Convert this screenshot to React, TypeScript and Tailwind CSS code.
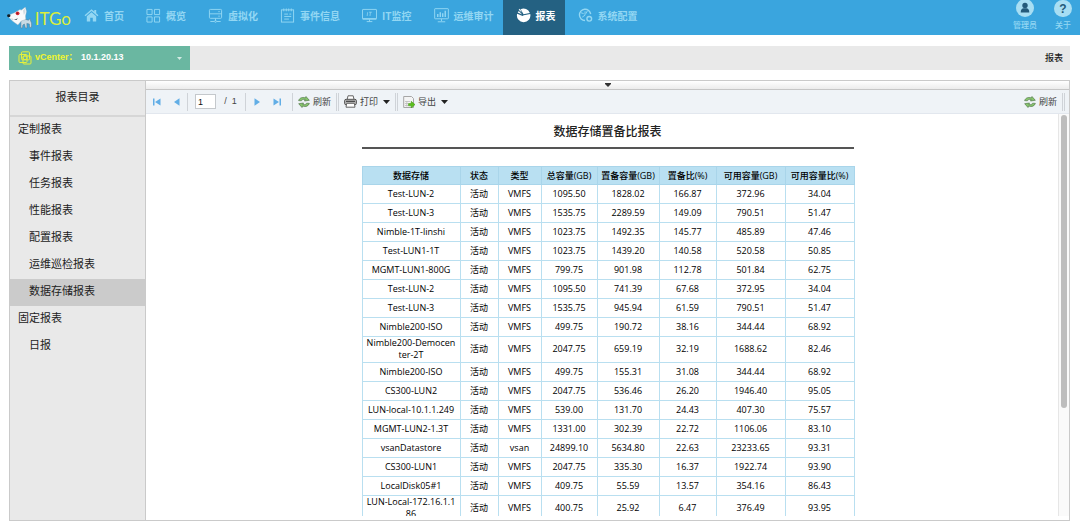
import { useState, type ReactNode } from "react";

const navItems = ["首页", "概览", "虚拟化", "事件信息", "IT监控", "运维审计", "报表", "系统配置"];

const navIcons: Record<string, ReactNode> = {
  首页: (
    <g fill="currentColor" stroke="none">
      <path d="M8 1.2 0.6 7.6l1 1.1L8 3.2l6.4 5.5 1-1.1-2.4-2.1V2h-2v1.8z" />
      <path d="M8 4.6 3 8.9V14.5h3.6v-4h2.8v4H13V8.9z" />
    </g>
  ),
  概览: <path d="M1 1.5h5.5V7H1zM9 1.5h5.5V7H9zM1 9.5h5.5V15H1zM9 9.5h5.5V15H9z" />,
  虚拟化: (
    <>
      <rect x="1.5" y="1.5" width="13" height="9.5" rx="1" />
      <path d="M1.5 6.2h13M11 3.9h1.5M11 8.7h1.5M8 11v3M2.5 14.4h4M9.5 14.4h4" />
      <circle cx="8" cy="14.3" r="1" />
    </>
  ),
  事件信息: (
    <>
      <rect x="1.5" y="2" width="13" height="13" />
      <path d="M4 .5v3M6.7 .5v3M9.3 .5v3M12 .5v3M4.5 6.5h4M4.5 9h7.5M4.5 11.8h5M10 6.5h2" />
    </>
  ),
  IT监控: (
    <>
      <rect x="0.5" y="1.5" width="15" height="10.5" rx="0.5" />
      <path d="M6 4.5 5.5 8.5M7.5 4.5h3M9 4.5l-.5 4" strokeWidth="0.8" />
      <path d="M1 11.3h14M5 14.5h6M8 12v2.5" />
    </>
  ),
  运维审计: (
    <>
      <rect x="0.7" y="0.7" width="14.6" height="10.8" rx="0.5" />
      <path d="M4 9.5V6.5M6.7 9.5V4.5M9.3 9.5V5.5M12 9.5V3" strokeWidth="1.5" />
      <path d="M8 11.5V14M4 14.7h8" />
    </>
  ),
  报表: (
    <g fill="currentColor" stroke="none">
      <path d="M1.2 6.2 7 8.6l1.2-.8 7-1.4A7.2 7.2 0 1 1 1.2 6.2z" />
      <path d="M8 6.6 5 1.3A7.2 7.2 0 0 1 14.8 5.2z" />
      <path d="M6.6 6.9 1.8 4.9 3 3.2z" />
      <path d="M6.2 4.9 2.8 1.9 4.2 .9z" />
    </g>
  ),
  系统配置: (
    <>
      <path d="M13.5 6.5A6 6 0 1 0 7.5 13.3" strokeWidth="1.5" />
      <path d="M7.5 3.5v4.2l-3 2M3 5l3 1M10 3l-1.5 3" />
      <circle cx="12" cy="11.5" r="2.5" strokeWidth="1.5" />
    </>
  ),
};

const menu = [
  { label: "定制报表", items: ["事件报表", "任务报表", "性能报表", "配置报表", "运维巡检报表", "数据存储报表"] },
  { label: "固定报表", items: ["日报"] },
];

const columns = [
  { label: "数据存储", width: "w-[98px]" },
  { label: "状态", width: "w-[38px]" },
  { label: "类型", width: "w-[43px]" },
  { label: "总容量(GB)", width: "w-[56px]" },
  { label: "置备容量(GB)", width: "w-[62px]" },
  { label: "置备比(%)", width: "w-[57px]" },
  { label: "可用容量(GB)", width: "w-[69px]" },
  { label: "可用容量比(%)", width: "w-[69px]" },
];

const rows = [
  ["Test-LUN-2", "活动", "VMFS", "1095.50", "1828.02", "166.87", "372.96", "34.04"],
  ["Test-LUN-3", "活动", "VMFS", "1535.75", "2289.59", "149.09", "790.51", "51.47"],
  ["Nimble-1T-linshi", "活动", "VMFS", "1023.75", "1492.35", "145.77", "485.89", "47.46"],
  ["Test-LUN1-1T", "活动", "VMFS", "1023.75", "1439.20", "140.58", "520.58", "50.85"],
  ["MGMT-LUN1-800G", "活动", "VMFS", "799.75", "901.98", "112.78", "501.84", "62.75"],
  ["Test-LUN-2", "活动", "VMFS", "1095.50", "741.39", "67.68", "372.95", "34.04"],
  ["Test-LUN-3", "活动", "VMFS", "1535.75", "945.94", "61.59", "790.51", "51.47"],
  ["Nimble200-ISO", "活动", "VMFS", "499.75", "190.72", "38.16", "344.44", "68.92"],
  ["Nimble200-Democen\nter-2T", "活动", "VMFS", "2047.75", "659.19", "32.19", "1688.62", "82.46"],
  ["Nimble200-ISO", "活动", "VMFS", "499.75", "155.31", "31.08", "344.44", "68.92"],
  ["CS300-LUN2", "活动", "VMFS", "2047.75", "536.46", "26.20", "1946.40", "95.05"],
  ["LUN-local-10.1.1.249", "活动", "VMFS", "539.00", "131.70", "24.43", "407.30", "75.57"],
  ["MGMT-LUN2-1.3T", "活动", "VMFS", "1331.00", "302.39", "22.72", "1106.06", "83.10"],
  ["vsanDatastore", "活动", "vsan", "24899.10", "5634.80", "22.63", "23233.65", "93.31"],
  ["CS300-LUN1", "活动", "VMFS", "2047.75", "335.30", "16.37", "1922.74", "93.90"],
  ["LocalDisk05#1", "活动", "VMFS", "409.75", "55.59", "13.57", "354.16", "86.43"],
  ["LUN-Local-172.16.1.1\n86", "活动", "VMFS", "400.75", "25.92", "6.47", "376.49", "93.95"],
];

function DogLogo() {
  return (
    <svg viewBox="0 0 26 22" className="h-[22px] w-[26px]">
      <path
        d="M14 13.5c2-1.5 5-1.3 7.5-.3l2-1.7.3 2.5c1.2 1.5 1.2 4 .7 6.5h-1.7l-.3-3.5-2.5-.5.2 4.5h-1.7l-1-4-1.5 1-.5 3H14z"
        fill="#c9dbe5"
        stroke="#567587"
        strokeWidth="0.5"
      />
      <path
        d="M.8 8.5 8 5.5 13 2.5 14.5 3 18.5 0l1.2 4.5-1 4.5.3 3.5-4.5 1.5-3.5 4-5-3.5L2.5 11z"
        fill="#f8fafb"
        stroke="#8fa9b7"
        strokeWidth="0.4"
      />
      <path d="M16 3.5l2-2 .7 3.5-1.7 3z" fill="#d3dce2" />
      <path d="M4 11.5c2.500 1.300 5 1 7-.2L9.500 13z" fill="#32424c" />
      <ellipse cx="1.8" cy="8.7" rx="1.7" ry="1.5" fill="#111c22" />
      <circle cx="10.7" cy="6.3" r="1.9" fill="#d62a35" />
      <circle cx="10.3" cy="6.1" r="0.6" fill="#5c0b10" />
    </svg>
  );
}

function RefreshIcon() {
  return (
    <svg viewBox="0 0 12 12" className="size-3">
      <g fill="#86c46c" stroke="#446b3c" strokeWidth="0.6" strokeLinejoin="round">
        <path d="M.6 4.6C1.5 1.8 4.500.8 7.300 1.900L8 .5l3.300 3.800-4.800.7.6-1.400C5.600 3 4.200 3.300 3.300 4.800z" />
        <path d="M11.400 7.400C10.500 10.200 7.500 11.200 4.700 10.100L4 11.500.7 7.700l4.800-.7-.6 1.400c1.500.6 2.900.3 3.800-1.200z" />
      </g>
    </svg>
  );
}

function PrintIcon() {
  return (
    <svg viewBox="0 0 13 13" className="size-[13px]">
      <path d="M3.2 4.5 4 .8h5.2l.8 3.7" fill="#fff" stroke="#666" />
      <rect x="0.6" y="4.3" width="11.8" height="5.5" rx="1.5" fill="#b5b5b5" stroke="#555" />
      <path d="M2 6.3h9" stroke="#333" />
      <path d="M2.7 8.3h7.6l.7 3.9H2z" fill="#fff" stroke="#666" />
    </svg>
  );
}

function ExportIcon() {
  return (
    <svg viewBox="0 0 12 12" className="size-3">
      <path d="M.7 .5h7.8l2 2v9H.7z" fill="#f4f4f4" stroke="#a6a6a6" />
      <path d="M2 5.5h5M2 7.5h3M2 9.5h3M3.8 5v5.5" stroke="#bcbcbc" strokeWidth="0.8" />
      <path d="M5.5 7.5h2.7V5.3L12 8.6 8.2 12V9.8H5.5z" fill="#5bc01c" stroke="#3c8e10" strokeWidth="0.5" />
    </svg>
  );
}

function VCenterIcon() {
  return (
    <svg viewBox="0 0 14 14" className="size-[14px]" fill="none" stroke="#e6f03a">
      <rect x="3.5" y="0.8" width="8" height="8" rx="1" />
      <rect x="1" y="3.5" width="8" height="8" rx="1" />
      <rect x="5" y="5" width="8" height="8" rx="1" />
      <circle cx="7" cy="6.7" r="2" />
    </svg>
  );
}

function PageButton({ label, path, onClick }: { label: string; path: string; onClick?: () => void }) {
  return (
    <button type="button" aria-label={label} onClick={onClick} className="flex w-2 cursor-pointer justify-center">
      <svg viewBox="0 0 8 8" className="size-2" fill="#62aee6">
        <path d={path} />
      </svg>
    </button>
  );
}

function Caret() {
  return (
    <svg viewBox="0 0 7 4" className="ml-[2px] h-1 w-[7px]" fill="#222">
      <path d="M0 0h7L3.5 4z" />
    </svg>
  );
}

function Separator({ double = false }: { double?: boolean }) {
  return (
    <span className={`h-[18px] border-l border-[#cfd3d8] ${double ? "w-[3px] border-r" : "w-px"}`} />
  );
}

function Navbar({ active, onSelect }: { active: string; onSelect: (name: string) => void }) {
  return (
    <header className="flex h-[35px] shrink-0 bg-[#3aa5de] text-[#93d7f3]">
      <div className="flex w-[71px] items-center gap-[2px] pl-[7px]">
        <DogLogo />
        <span className="pt-[3px] font-['Lato',sans-serif] text-[17px] leading-5 text-[#dcee3c]">ITGo</span>
      </div>
      <nav className="flex">
        {navItems.map((name) => (
          <button
            key={name}
            type="button"
            onClick={() => onSelect(name)}
            className={`flex cursor-pointer items-center gap-[5px] pr-[9px] pb-1 pl-[13px] text-[10px] font-bold whitespace-nowrap ${
              name === active ? "bg-[#246182] text-white" : ""
            }`}
          >
            <svg viewBox="0 0 16 16" className="size-[15px]" fill="none" stroke="currentColor">
              {navIcons[name]}
            </svg>
            {name}
          </button>
        ))}
      </nav>
      <div className="ml-auto flex gap-1 text-[8px] font-medium">
        <button type="button" className="flex w-[34px] cursor-pointer flex-col items-center gap-[2px]">
          <svg viewBox="0 1 18 17" className="h-[17px] w-[18px]">
            <circle cx="9" cy="9" r="9" fill="#a8def3" />
            <circle cx="9" cy="6.5" r="2.7" fill="#245a7a" />
            <path d="M4.700 13.500c0-3 1.500-4.300 2.700-4.300h3.200c1.200 0 2.700 1.300 2.700 4.300z" fill="#245a7a" />
          </svg>
          <span className="leading-3">管理员</span>
        </button>
        <button type="button" className="flex w-[34px] cursor-pointer flex-col items-center gap-[2px]">
          <span className="flex h-[17px] w-[18px] items-center justify-center rounded-full bg-[#a8def3] font-['Liberation_Sans',sans-serif] text-[12px] font-bold text-[#245a7a]">
            ?
          </span>
          <span className="leading-3">关于</span>
        </button>
      </div>
    </header>
  );
}

function Sidebar({ active, onSelect }: { active: string; onSelect: (name: string) => void }) {
  return (
    <aside className="w-[136px] shrink-0 border-r border-[#cacaca] bg-[#e9e9e9] text-[11px] text-[#222]">
      <h2 className="flex h-9 items-center justify-center border-b-2 border-[#d6d6d6] pb-[3px]">报表目录</h2>
      {menu.map((group) => (
        <div key={group.label}>
          <h3 className="flex h-[27px] items-center pb-1 pl-2">{group.label}</h3>
          {group.items.map((item) => (
            <button
              key={item}
              type="button"
              onClick={() => onSelect(item)}
              className={`flex h-[27px] w-full cursor-pointer items-center pb-1 pl-[19px] ${
                item === active ? "bg-[#cbcbcb]" : ""
              }`}
            >
              {item}
            </button>
          ))}
        </div>
      ))}
    </aside>
  );
}

function Toolbar() {
  const [page, setPage] = useState("1");

  return (
    <div className="flex h-[24px] shrink-0 items-center border-b border-[#e2e7ee] bg-[#eff3f7] pr-1 pl-[7px] text-[9px] text-[#444]">
      <div className="flex items-center gap-3">
        <PageButton label="第一页" path="M0 .5h1.500v7H0zM7.500 .5v7L2 4z" onClick={() => setPage("1")} />
        <PageButton label="上一页" path="M6.500 .3v7.400L1 4z" />
      </div>
      <div className="ml-[6px] flex items-center gap-[7px]">
        <Separator />
        <input
          aria-label="页码"
          value={page}
          onChange={(e) => setPage(e.target.value)}
          className="h-[15px] w-[21px] border border-[#c4c8cc] bg-white pl-[2px] font-['Liberation_Sans',sans-serif] text-[9px] text-[#111]"
        />
        <span className="w-[15px] text-center font-['Liberation_Sans',sans-serif] whitespace-pre">/  1</span>
        <Separator />
      </div>
      <div className="ml-[7px] flex items-center gap-3">
        <PageButton label="下一页" path="M1.500 .3v7.400L7 4z" />
        <PageButton label="最后一页" path="M.5 .5v7L6 4zM6.500 .5H8v7H6.500z" />
      </div>
      <div className="ml-[11px] flex items-center gap-[5px]">
        <Separator />
        <button type="button" className="flex cursor-pointer items-center gap-[3px]">
          <RefreshIcon />
          刷新
        </button>
        <Separator double />
        <button type="button" className="flex cursor-pointer items-center gap-[3px]">
          <PrintIcon />
          打印
          <Caret />
        </button>
        <Separator double />
        <button type="button" className="flex cursor-pointer items-center gap-[3px]">
          <ExportIcon />
          导出
          <Caret />
        </button>
      </div>
      <div className="ml-auto flex items-center gap-[5px]">
        <button type="button" className="flex cursor-pointer items-center gap-[3px]">
          <RefreshIcon />
          刷新
        </button>
        <Separator double />
      </div>
    </div>
  );
}

function Report() {
  return (
    <div className="flex-1 overflow-hidden pl-[11px]">
      <div className="mx-auto w-[492px]">
        <h1 className="border-b-2 border-[#555] pt-2 pb-[7px] text-center text-[12px] leading-[18px] font-medium text-[#222]">
          数据存储置备比报表
        </h1>
        <table className="mt-[17px] h-[356px] w-full table-fixed border-collapse text-center font-['Open_Sans','Noto_Sans_CJK_SC',sans-serif] text-[9px] leading-3 text-black">
          <thead>
            <tr className="h-[18px] bg-[#b9e0f2]">
              {columns.map((col) => (
                <th
                  key={col.label}
                  className={`${col.width} border border-[#a9d5ea] p-0 font-medium whitespace-nowrap`}
                >
                  {col.label}
                </th>
              ))}
            </tr>
          </thead>
          <tbody>
            {rows.map((row, i) => (
              <tr key={i} className="h-[18px]">
                {row.map((cell, j) => (
                  <td key={j} className="border border-[#b9dff0] p-0 whitespace-pre">
                    {cell}
                  </td>
                ))}
              </tr>
            ))}
          </tbody>
        </table>
      </div>
    </div>
  );
}

export default function App() {
  const [tab, setTab] = useState("报表");
  const [report, setReport] = useState("数据存储报表");

  return (
    <div className="flex h-screen flex-col bg-white font-['Noto_Sans_CJK_SC',sans-serif]">
      <Navbar active={tab} onSelect={setTab} />

      <div className="mt-[11px] mr-[10px] ml-[9px] flex h-6 shrink-0 items-center justify-between bg-[#e9e9e9] pr-[7px] text-[9px]">
        <div className="flex h-full w-[181px] items-center bg-[#6ab7a1] pr-[8px] pl-[9px] font-['Liberation_Sans','Noto_Sans_CJK_SC',sans-serif] font-bold">
          <VCenterIcon />
          <label htmlFor="vcenter" className="ml-[3px] w-[46px] whitespace-nowrap text-[#f0f52e]">
            vCenter：
          </label>
          <select id="vcenter" className="min-w-0 flex-1 cursor-pointer appearance-none text-white">
            <option>10.1.20.13</option>
          </select>
          <svg viewBox="0 0 5 3" className="h-[3px] w-[5px]" fill="#d3ebe4">
            <path d="M0 0h5L2.5 3z" />
          </svg>
        </div>
        <span className="font-medium text-[#222]">报表</span>
      </div>

      <main className="mt-[10px] mr-[10px] mb-[2px] ml-[9px] flex min-h-0 flex-1 border border-[#cacaca]">
        <Sidebar active={report} onSelect={setReport} />
        <section className="flex min-w-0 flex-1 flex-col">
          <button
            type="button"
            aria-label="收起"
            className="flex h-[9px] shrink-0 cursor-pointer items-center justify-center border-b border-[#c6c6c6] bg-linear-to-b from-white to-[#ececec]"
          >
            <svg viewBox="0 0 6 4" className="h-1 w-[6px]" fill="#333">
              <path d="M0 0h6v1L3 4 0 1z" />
            </svg>
          </button>
          <Toolbar />
          <div className="mb-1 flex min-h-0 flex-1">
            <Report />
            <div className="w-[11px] border-l border-[#e6e6e6] bg-[#fafafa] px-[2px] pt-px">
              <div className="h-[73%] w-[6px] rounded-full bg-[#bdbdbd]" />
            </div>
          </div>
        </section>
      </main>
    </div>
  );
}
